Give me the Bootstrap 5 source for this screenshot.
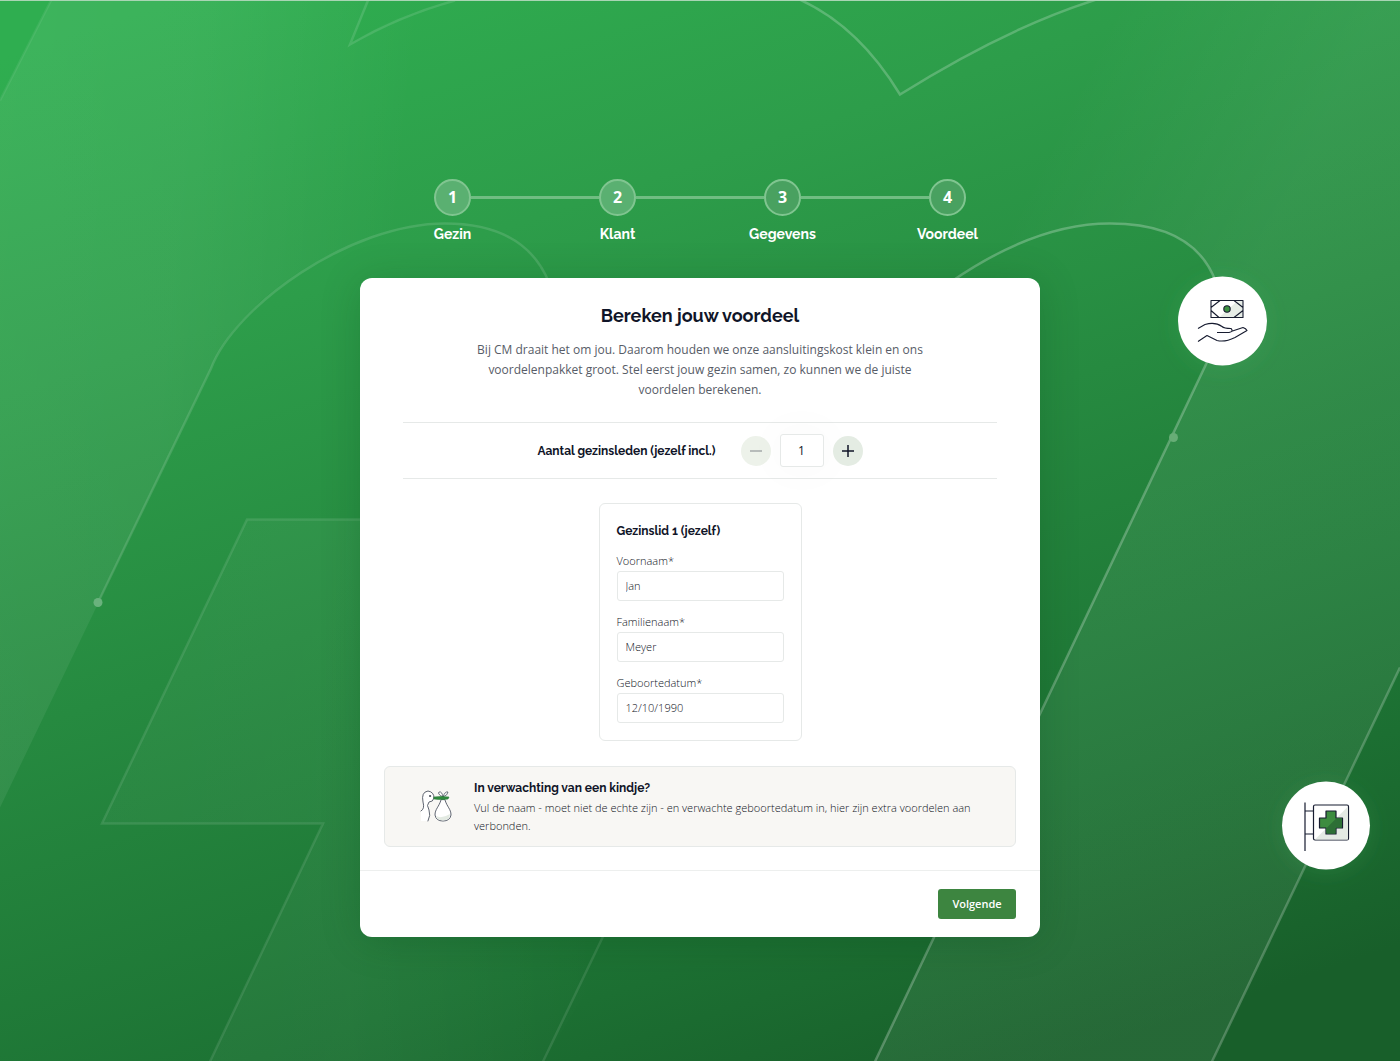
<!DOCTYPE html>
<html lang="nl">
<head>
<meta charset="utf-8">
<meta name="viewport" content="width=device-width, initial-scale=1">
<title>Bereken jouw voordeel</title>
<link rel="stylesheet" href="https://cdn.jsdelivr.net/npm/bootstrap@5.3.0/dist/css/bootstrap.min.css">
<style>
  :root { --ink: #101528; --body: #2b303c; --soft: #575c67; --line: #e6e9e8; }
  body { font-family: "Open Sans", sans-serif; font-size: 12px; color: var(--body); background: #237f3c; }
  .stage { min-height: 100vh; padding: 178px 16px 124px; border-top: 1px solid #a9d5b4; overflow: hidden; }
  .backdrop { inset: 0; width: 100%; height: 100%; }
  .heading { font-family: Raleway, Lato, sans-serif; font-weight: 700; color: var(--ink); line-height: 20px; font-size: 12px; }

  .steps { max-width: 660px; margin-bottom: 32px; }
  .step-dot { width: 37px; height: 37px; border: 2px solid #80c590; background: #49a160; font-size: 16px; font-weight: 700; line-height: 20px; padding-bottom: 2px; }
  .step-dot.reached { background: #5ab071; }
  .step-line { height: 3px; background: #70bd82; }
  .step-name { font-family: Raleway, Lato, sans-serif; font-size: 14px; line-height: 24px; font-weight: 700; margin-top: 6px; }

  .panel { max-width: 680px; border-radius: 12px; box-shadow: 0 4px 40px rgba(0, 60, 20, .2); }
  .panel-main { padding: 23px 24px; }
  .panel h1 { font-size: 18px; line-height: 30px; margin-bottom: 9px; }
  .intro { max-width: 460px; line-height: 20px; color: var(--soft); margin-bottom: 22px; }
  .counter-row { margin: 0 19px 24px; height: 57px; border: solid var(--line); border-width: 1px 0; }
  .counter { gap: 9px; margin-left: 25px; }
  .round-btn { width: 30px; height: 30px; background: #e4ece3; color: var(--ink); border: 0; }
  .round-btn:disabled { background: #edf2ea; color: #a4aaaa; border: 0; opacity: 1; }
  .panel .form-control { font-size: 11px; color: var(--body); border-color: var(--line); border-radius: 3px; height: 30px; padding: 0 8px 1px; }
  .counter .form-control { width: 44px; height: 33px; font-size: 12px; color: var(--ink); box-shadow: 0 0 40px 8px rgba(20, 60, 30, .02); }
  .member { width: 203px; padding: 17px; border: 1px solid var(--line); border-radius: 6px; margin-bottom: 25px; }
  .member h2 { margin-bottom: 10px; }
  .member label { display: block; font-size: 11px; line-height: 20px; }
  .field + .field { margin-top: 11px; }
  .field, .field .form-control, .notice p { font-weight: 300; color: #10131c; }
  .notice { padding: 11px 34px; border: 1px solid var(--line); border-radius: 6px; background: #f8f7f4; }
  .notice p { font-size: 11px; line-height: 18px; margin-top: 1px; }
  .notice svg { margin-right: 21px; }
  .panel-foot { border-top: 1px solid #edefee; padding: 18px 24px; }
  .btn-next { --bs-btn-bg: #3d8540; --bs-btn-color: #fff; --bs-btn-hover-bg: #2f7033; --bs-btn-hover-color: #fff; --bs-btn-border-radius: 3px; --bs-btn-font-size: 11px; --bs-btn-font-weight: 600; width: 78px; height: 30px; padding: 0; }
</style>
</head>
<body>
<div class="stage position-relative">
  <svg class="backdrop position-absolute" viewBox="0 0 1400 1061" preserveAspectRatio="xMidYMid slice" aria-hidden="true">
    <defs>
      <linearGradient id="base" gradientUnits="userSpaceOnUse" x1="350" y1="-60" x2="760" y2="1160">
        <stop offset="0" stop-color="#2fae50"/><stop offset=".25" stop-color="#2d9d4a"/><stop offset=".5" stop-color="#268a40"/><stop offset=".8" stop-color="#1d7334"/><stop offset="1" stop-color="#185f2a"/>
      </linearGradient>
      <linearGradient id="glowLeft" gradientUnits="userSpaceOnUse" x1="0" y1="200" x2="400" y2="240">
        <stop offset="0" stop-color="#fff" stop-opacity=".07"/><stop offset=".45" stop-color="#fff" stop-opacity=".06"/><stop offset="1" stop-color="#fff" stop-opacity="0"/>
      </linearGradient>
      <linearGradient id="glowRight" gradientUnits="userSpaceOnUse" x1="900" y1="440" x2="1116" y2="546">
        <stop offset="0" stop-color="#fff" stop-opacity="0"/><stop offset="1" stop-color="#fff" stop-opacity=".06"/>
      </linearGradient>
      <linearGradient id="glowMid" gradientUnits="userSpaceOnUse" x1="100" y1="0" x2="600" y2="0">
        <stop offset="0" stop-color="#fff" stop-opacity=".03"/><stop offset=".5" stop-color="#fff" stop-opacity=".04"/><stop offset="1" stop-color="#fff" stop-opacity="0"/>
      </linearGradient>
      <filter id="halo" x="-50%" y="-50%" width="200%" height="200%"><feDropShadow dx="0" dy="3" stdDeviation="10" flood-color="#4cb56a" flood-opacity=".2"/></filter>
    </defs>
    <rect width="1400" height="1061" fill="url(#base)"/>
    <path fill="url(#glowLeft)" d="M51 0H370L349 44Q400 10 455 0H700L550 278Q525 223 445 223C350 223 235 300 211 368L0 807V100Z"/>
    <path fill="url(#glowRight)" d="M980 0H1400V667L1212 1061H875L1222 330 1216 282Q1195 223 1110 223Q1035 223 950 282L900 94Z"/>
    <path fill="url(#glowMid)" d="M247 519H620V937L543 1061H210L323 823H102Z"/>
    <g fill="none" stroke="#fff" stroke-width="2.500">
      <path stroke-opacity=".07" d="M51 0 0 100"/>
      <path stroke-opacity=".12" d="M372 -10 350 44Q400 15 455 0"/>
      <path stroke-opacity=".13" d="M98 602 211 368C235 305 350 223 445 223Q525 223 549 282"/>
      <path stroke-opacity=".22" d="M790 -5Q855 20 900 94Q1010 25 1103 -3"/>
      <path stroke-opacity=".25" d="M950 282Q1035 223 1110 223Q1195 223 1216 282L1222 330 875 1061"/>
      <path stroke-opacity=".22" d="M1400 667 1212 1061"/>
      <path stroke-opacity=".1" d="M365 519H247L102 823H323L210 1061M604 934 543 1061"/>
    </g>
    <circle cx="98" cy="602" r="4.500" fill="#6ab27d"/>
    <circle cx="1173.500" cy="437" r="4.500" fill="#67ad76"/>
    <g filter="url(#halo)" fill="#fff"><circle cx="1222.500" cy="320.500" r="44.500"/><circle cx="1326" cy="825" r="44"/></g>
    <!-- Banknote above an open hand -->
    <g fill="none" stroke="#171c30" stroke-width="1.100" stroke-linejoin="round">
      <path fill="#e7ede7" stroke="none" d="M1219 317 1238 300H1243V317Z"/>
      <path d="M1211 300H1243V317H1211ZM1211 307 1220 300M1211 310 1219 317M1234 300 1243 307M1234 317 1243 310"/>
      <circle cx="1227" cy="308.500" r="3.200" fill="#3d9142"/>
      <path d="M1198 328 1205 324Q1215 321 1222 326Q1224 328 1231 328Q1234 331 1229 332H1217M1231 331 1243 327Q1246 328 1247 330L1235 337Q1225 342 1217 340L1207 335 1198 341"/>
    </g>
    <!-- Pharmacy sign on a pole -->
    <g stroke="#171c30" stroke-width="1.200" stroke-linejoin="round">
      <path fill="none" d="M1305 802V850.500M1305 810.500H1313M1305 833.500H1313"/>
      <rect x="1313.500" y="804.500" width="35" height="35" rx="1.500" fill="#fff"/>
      <path fill="#e4eae4" stroke="none" d="M1315 839 1348 806V839Z"/>
      <path fill="#3d8c40" d="M1326 810.500H1336V817.500H1342.500V827.500H1336V833.500H1326V827.500H1319.500V817.500H1326Z"/>
      <path fill="#2d6f36" stroke="none" d="M1326 828 1336.500 817.800H1342V827H1335.500V833H1326.500Z"/>
    </g>
  </svg>

  <ol class="steps position-relative list-unstyled d-flex mx-auto text-white text-center">
    <li class="flex-fill w-25"><div class="d-flex align-items-center"><span class="step-line flex-fill invisible"></span><span class="step-dot reached rounded-circle d-flex align-items-center justify-content-center">1</span><span class="step-line flex-fill"></span></div><div class="step-name">Gezin</div></li>
    <li class="flex-fill w-25"><div class="d-flex align-items-center"><span class="step-line flex-fill"></span><span class="step-dot reached rounded-circle d-flex align-items-center justify-content-center">2</span><span class="step-line flex-fill"></span></div><div class="step-name">Klant</div></li>
    <li class="flex-fill w-25"><div class="d-flex align-items-center"><span class="step-line flex-fill"></span><span class="step-dot rounded-circle d-flex align-items-center justify-content-center">3</span><span class="step-line flex-fill"></span></div><div class="step-name">Gegevens</div></li>
    <li class="flex-fill w-25"><div class="d-flex align-items-center"><span class="step-line flex-fill"></span><span class="step-dot rounded-circle d-flex align-items-center justify-content-center">4</span><span class="step-line flex-fill invisible"></span></div><div class="step-name">Voordeel</div></li>
  </ol>

  <form class="panel position-relative bg-white mx-auto">
    <div class="panel-main">
      <h1 class="heading text-center">Bereken jouw voordeel</h1>
      <p class="intro text-center mx-auto">Bij CM draait het om jou. Daarom houden we onze aansluitingskost klein en ons voordelenpakket groot. Stel eerst jouw gezin samen, zo kunnen we de juiste voordelen berekenen.</p>
      <div class="counter-row d-flex align-items-center justify-content-center">
        <label class="heading" for="count">Aantal gezinsleden (jezelf incl.)</label>
        <div class="counter d-flex align-items-center">
          <button type="button" class="round-btn rounded-circle d-flex align-items-center justify-content-center p-0" aria-label="Minder" disabled><svg width="12" height="12" viewBox="0 0 12 12" stroke="currentColor" stroke-width="1.500"><path d="M0 6H12"/></svg></button>
          <input class="form-control text-center" id="count" type="text" inputmode="numeric" value="1">
          <button type="button" class="round-btn rounded-circle d-flex align-items-center justify-content-center p-0" aria-label="Meer"><svg width="12" height="12" viewBox="0 0 12 12" stroke="currentColor" stroke-width="1.500"><path d="M0 6H12M6 0V12"/></svg></button>
        </div>
      </div>
      <section class="member mx-auto">
        <h2 class="heading">Gezinslid 1 (jezelf)</h2>
        <div class="field"><label for="first">Voornaam*</label><input class="form-control" id="first" type="text" value="Jan"></div>
        <div class="field"><label for="last">Familienaam*</label><input class="form-control" id="last" type="text" value="Meyer"></div>
        <div class="field"><label for="born">Geboortedatum*</label><input class="form-control" id="born" type="text" value="12/10/1990"></div>
      </section>
      <aside class="notice d-flex align-items-center">
        <!-- Stork carrying a bundle -->
        <svg class="flex-shrink-0" width="34" height="34" viewBox="0 0 34 34" fill="none" stroke="#4d5461" stroke-linecap="round" stroke-linejoin="round">
          <path fill="#fff" stroke="none" d="M2 21Q5 18 4 12Q3 2 9 2Q15 3 15 9Q14 12 10 12Q8 15 11 21L9 31H2Z"/>
          <path stroke-width=".9" d="M2 21Q6 19 4 12Q2 2 9 1Q15 2 15 8Q14 12 10 12Q7 15 10 20Q12 25 9 31"/>
          <circle cx="11" cy="6" r=".6" fill="#222"/>
          <path fill="#fff" stroke-width=".9" d="M22 10C20 17 16 19 16 25Q17 31 24 31Q31 31 32 25C32 19 28 17 26 10Z"/>
          <path fill="#e3eae2" stroke="none" d="M17 26Q23 29 31 24Q31 30 24 30.500Q18 30 17 26Z"/>
          <path fill="#fff" stroke-width=".8" d="M24 7Q18 4 20 2Q23 1 24 7Q26 1 29 2Q29 5 24 7Z"/>
          <path fill="#2f8d3c" stroke="#277638" stroke-width=".6" d="M15 7Q22 6 30 7L29 9Q22 10 15 9Z"/>
        </svg>
        <div>
          <h2 class="heading mb-0">In verwachting van een kindje?</h2>
          <p class="mb-0">Vul de naam - moet niet de echte zijn - en verwachte geboortedatum in, hier zijn extra voordelen aan verbonden.</p>
        </div>
      </aside>
    </div>
    <div class="panel-foot d-flex justify-content-end"><button type="submit" class="btn btn-next">Volgende</button></div>
  </form>
</div>
<script src="https://cdn.jsdelivr.net/npm/bootstrap@5.3.0/dist/js/bootstrap.bundle.min.js"></script>
</body>
</html>
